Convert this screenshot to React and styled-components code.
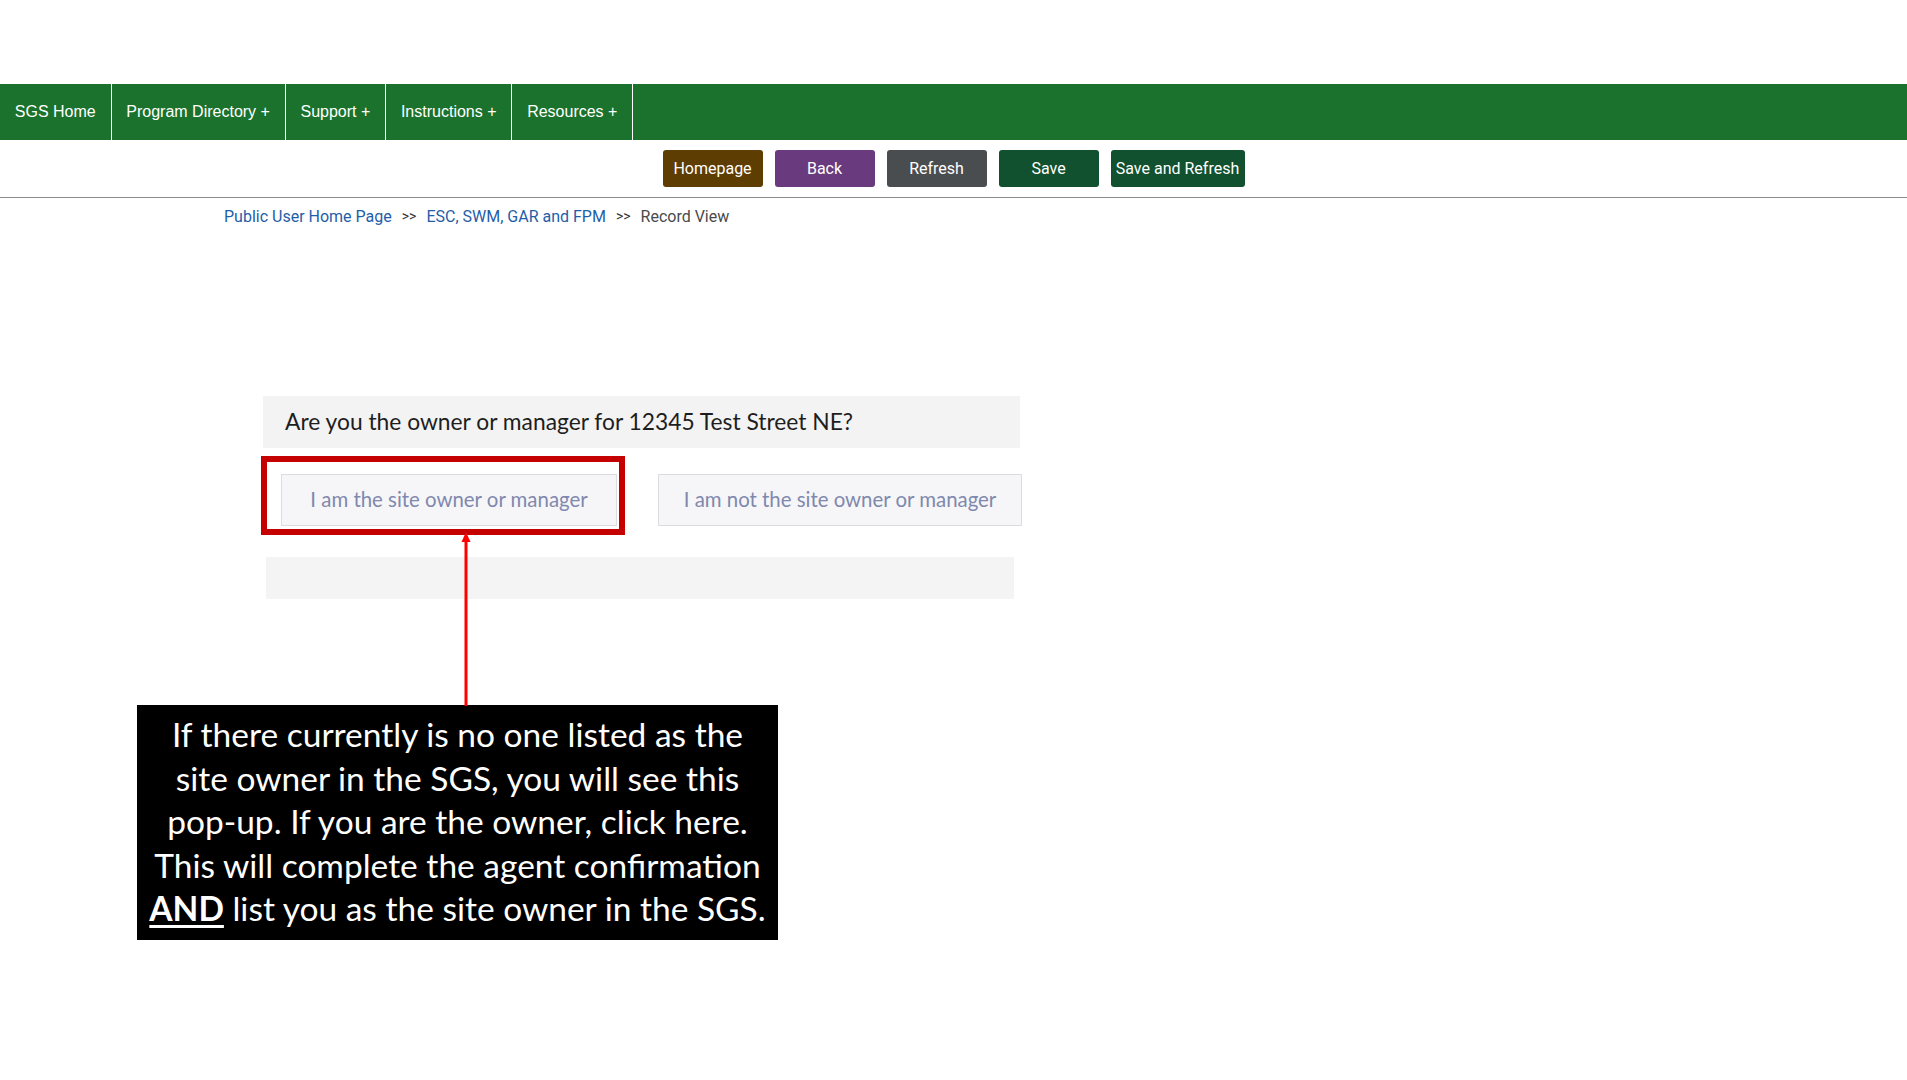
import React from "react";
import styled, { createGlobalStyle } from "styled-components";

const GlobalStyle = createGlobalStyle`
  body {
    margin: 0;
    background: #ffffff;
    font-family: Roboto, "Liberation Sans", sans-serif;
  }
`;

const navItems = ["SGS Home", "Program Directory +", "Support +", "Instructions +", "Resources +"];

const actions = [
  { label: "Homepage", color: "#5e3d02" },
  { label: "Back", color: "#6a3a7e" },
  { label: "Refresh", color: "#4a4d4f" },
  { label: "Save", color: "#12512f" },
  { label: "Save and Refresh", color: "#12512f", wide: true },
];

function App() {
  return (
    <>
      <GlobalStyle />
      <Page>
        <TopSpace />
        <NavBar>
          {navItems.map((item) => (
            <NavItem key={item}>{item}</NavItem>
          ))}
        </NavBar>
        <Toolbar>
          {actions.map((a) => (
            <ActionButton key={a.label} $color={a.color} $wide={a.wide}>
              {a.label}
            </ActionButton>
          ))}
        </Toolbar>
        <Breadcrumb>
          <Crumb>Public User Home Page</Crumb>
          <CrumbSep>&gt;&gt;</CrumbSep>
          <Crumb>ESC, SWM, GAR and FPM</Crumb>
          <CrumbSep>&gt;&gt;</CrumbSep>
          <CurrentCrumb>Record View</CurrentCrumb>
        </Breadcrumb>

        <Scene>
          <Dialog>
            <Question>Are you the owner or manager for 12345 Test Street NE?</Question>
            <ChoiceRow>
              <Highlight>
                <Choice>I am the site owner or manager</Choice>
              </Highlight>
              <Choice $offset>I am not the site owner or manager</Choice>
            </ChoiceRow>
            <EmptyBar />
          </Dialog>

          <Arrow viewBox="0 0 10 174" preserveAspectRatio="none">
            <polygon points="5,0 9.5,10 0.5,10" fill="#ff0000" />
            <rect x="3.5" y="8" width="3" height="166" fill="#ff0000" />
          </Arrow>

          <Callout>
            If there currently is no one listed as the
            <br />
            site owner in the SGS, you will see this
            <br />
            pop-up. If you are the owner, click here.
            <br />
            This will complete the agent confirmation
            <br />
            <Strong>AND</Strong> list you as the site owner in the SGS.
          </Callout>
        </Scene>
      </Page>
    </>
  );
}

const Page = styled.div`
  display: flex;
  flex-direction: column;
  min-height: 1080px;
`;

const TopSpace = styled.div`
  height: 84px;
`;

const NavBar = styled.nav`
  display: flex;
  height: 56px;
  background: #1b722d;
`;

const NavItem = styled.div`
  display: flex;
  align-items: center;
  padding: 0 14.8px;
  border-right: 1px solid #ffffff;
  color: #ffffff;
  font-family: "Liberation Sans", Arial, sans-serif;
  font-size: 16px;
`;

const Toolbar = styled.div`
  display: flex;
  justify-content: center;
  gap: 12px;
  padding: 10px 0 10px;
  border-bottom: 1px solid #8c8c8c;
`;

const ActionButton = styled.div`
  display: flex;
  align-items: center;
  justify-content: center;
  box-sizing: border-box;
  width: ${(p) => (p.$wide ? "134px" : "100px")};
  height: 37px;
  border-radius: 3px;
  background: ${(p) => p.$color};
  color: #ffffff;
  font-size: 16px;
`;

const Breadcrumb = styled.div`
  display: flex;
  align-items: center;
  gap: 10px;
  padding: 8px 0 0 224px;
  height: 20px;
  font-size: 16px;
`;

const Crumb = styled.span`
  color: #1f5ea8;
`;

const CrumbSep = styled.span`
  color: #333333;
  font-size: 14px;
`;

const CurrentCrumb = styled.span`
  color: #4a4a4a;
`;

const Scene = styled.div`
  position: relative;
  display: flex;
  flex-direction: column;
  margin-top: 170px;
`;

const Dialog = styled.div`
  display: flex;
  flex-direction: column;
  margin-left: 261px;
  width: 762px;
  font-family: Lato, "Open Sans", sans-serif;
`;

const Question = styled.div`
  display: flex;
  align-items: center;
  margin-left: 2px;
  width: 757px;
  height: 52px;
  box-sizing: border-box;
  padding: 0 0 2px 22px;
  background: #f3f3f3;
  color: #1e1e1e;
  font-size: 22.8px;
`;

const ChoiceRow = styled.div`
  display: flex;
  align-items: flex-start;
  margin-top: 8px;
`;

const Highlight = styled.div`
  border: 6px solid #c40000;
  padding: 12px 2px 3px 14px;
`;

const Choice = styled.div`
  display: flex;
  align-items: center;
  justify-content: center;
  box-sizing: border-box;
  width: ${(p) => (p.$offset ? "364px" : "336px")};
  height: 52px;
  margin: ${(p) => (p.$offset ? "18px 0 0 33px" : "0")};
  padding-bottom: 2px;
  background: #f6f6f8;
  border: 1px solid #dcdce0;
  color: #8088ae;
  font-size: 20.4px;
`;

const EmptyBar = styled.div`
  margin: 22px 0 0 5px;
  width: 748px;
  height: 42px;
  background: #f4f4f4;
`;

const Arrow = styled.svg`
  position: absolute;
  left: 461px;
  top: 136px;
  width: 10px;
  height: 174px;
`;

const Callout = styled.div`
  margin: 106px 0 0 137px;
  width: 641px;
  height: 235px;
  box-sizing: border-box;
  padding-top: 8px;
  background: #000000;
  color: #ffffff;
  text-align: center;
  font-family: Lato, "Open Sans", sans-serif;
  font-size: 33.5px;
  line-height: 43.6px;
  white-space: nowrap;
`;

const Strong = styled.span`
  font-weight: 700;
  text-decoration: underline;
  text-underline-offset: 4px;
`;

export default App;
